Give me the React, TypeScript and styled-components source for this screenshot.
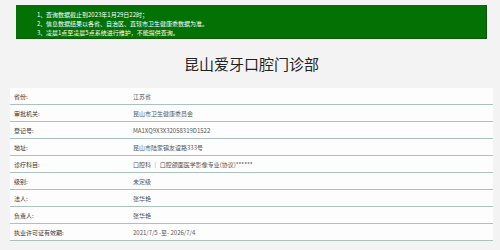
import React from "react";
import styled, { createGlobalStyle } from "styled-components";

const notices = [
  "查询数据截止到2023年1月29日22时；",
  "信息数据结果以各省、自治区、直辖市卫生健康委数据为准。",
  "凌晨1点至凌晨5点系统进行维护，不能提供查询。",
];

const rows = [
  { label: "省份:", value: "江苏省" },
  { label: "审批机关:", value: "昆山市卫生健康委员会" },
  { label: "登记号:", value: "MA1XQ9X3X32058319D1522" },
  { label: "地址:", value: "昆山市陆家镇友谊路333号" },
  { label: "诊疗科目:", value: "口腔科 ｜ 口腔颌面医学影像专业(协议)******" },
  { label: "级别:", value: "未定级" },
  { label: "法人:", value: "张华艳" },
  { label: "负责人:", value: "张华艳" },
  { label: "执业许可证有效期:", value: "2021/7/5 -至- 2026/7/4" },
];

const App = () => {
  return (
    <Page>
      <GlobalStyle />
      <Notice>
        {notices.map((text, i) => (
          <NoticeLine key={i}>
            <Num>{i + 1}、</Num>
            {text}
          </NoticeLine>
        ))}
      </Notice>
      <Title>昆山爱牙口腔门诊部</Title>
      <InfoTable>
        {rows.map((row) => (
          <Row key={row.label}>
            <Label>{row.label}</Label>
            <Value>{row.value}</Value>
          </Row>
        ))}
      </InfoTable>
    </Page>
  );
};

export default App;

const GlobalStyle = createGlobalStyle`
  html, body {
    margin: 0;
    padding: 0;
    background: #f3f3f3;
    font-family: "Noto Sans CJK SC", "Noto Sans", sans-serif;
  }
`;

const Page = styled.div`
  width: 500px;
  height: 250px;
  overflow: hidden;
  padding-top: 5px;
  box-sizing: border-box;
`;

const Notice = styled.div`
  margin: 0 13px 0 16px;
  height: 34px;
  box-sizing: border-box;
  padding: 4.5px 0 0 21px;
  background: #037103;
  border-right: 1px solid #0a5a0a;
  border-bottom: 1px solid #0a5a0a;
`;

const NoticeLine = styled.div`
  display: flex;
  font-size: 6px;
  line-height: 9px;
  color: #ffffff;
  white-space: nowrap;
`;

const Num = styled.span`
  width: 9px;
`;

const Title = styled.h1`
  margin: 15px 0 14px;
  height: 20px;
  font-size: 15px;
  line-height: 20px;
  font-weight: 400;
  color: #222222;
  text-align: center;
  padding-left: 3px;
`;

const InfoTable = styled.div`
  margin: 0 7px 0 10px;
  background: #fdfdfd;
`;

const Row = styled.div`
  display: grid;
  grid-template-columns: 123px 1fr;
  height: 17px;
  box-sizing: border-box;
  align-items: center;
  border-bottom: 1px solid #a9c3ba;
`;

const Label = styled.div`
  padding-left: 4px;
  font-size: 6px;
  color: #333333;
  white-space: nowrap;
`;

const Value = styled.div`
  font-size: 6px;
  color: #555555;
  white-space: nowrap;
`;
